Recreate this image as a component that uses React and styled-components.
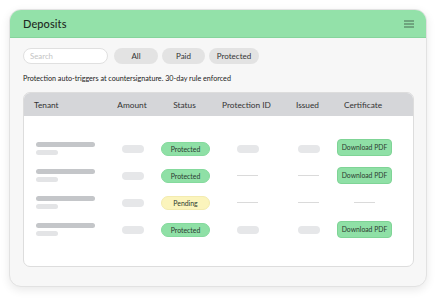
import React from "react";
import styled, { createGlobalStyle } from "styled-components";

const Global = createGlobalStyle`
  html, body { margin: 0; padding: 0; background: #ffffff; }
  body { font-family: Lato, "Noto Sans", "DejaVu Sans", sans-serif; color: #222; }
  * { box-sizing: border-box; }
`;

const Page = styled.div`
  width: 440px;
  height: 301px;
  padding: 9px 13px 14px 9px;
`;

const Card = styled.div`
  width: 418px;
  height: 278px;
  border-radius: 12px;
  background: #f7f7f7;
  border: 1px solid #e2e2e2;
  box-shadow: 0 3px 10px rgba(0, 0, 0, 0.09);
  overflow: hidden;
  display: flex;
  flex-direction: column;
`;

const Header = styled.div`
  height: 28px;
  flex: none;
  background: #93e1a9;
  border-bottom: 1px solid #86d49c;
  display: flex;
  align-items: center;
  justify-content: space-between;
  padding: 0 12px 0 13px;
`;

const Title = styled.h1`
  margin: 0;
  font-size: 11px;
  font-weight: 500;
  color: #1f2a22;
  letter-spacing: 0.1px;
`;

const Body = styled.div`
  padding: 10px 13px 0 13px;
  display: flex;
  flex-direction: column;
`;

const Toolbar = styled.div`
  display: flex;
  align-items: center;
  gap: 4px;
  height: 16px;
`;

const Search = styled.div`
  width: 85px;
  height: 16px;
  border-radius: 8px;
  background: #ffffff;
  border: 1px solid #e0e0e0;
  font-size: 7.8px;
  color: #c4c4c4;
  display: flex;
  align-items: center;
  padding-left: 6px;
  margin-right: 2px;
`;

const Chip = styled.div`
  width: ${(p) => p.$w}px;
  height: 16px;
  border-radius: 8px;
  background: #e3e3e3;
  font-size: 8px;
  color: #333;
  display: flex;
  align-items: center;
  justify-content: center;
`;

const Note = styled.p`
  margin: 10px 0 0 0;
  font-size: 7.2px;
  color: #222;
  line-height: 9px;
`;

const Table = styled.div`
  margin-top: 9px;
  width: 391px;
  height: 175px;
  background: #ffffff;
  border: 1px solid #dddddd;
  border-radius: 7px;
  overflow: hidden;
`;

const Grid = styled.div`
  display: grid;
  grid-template-columns: 76px 44px 61px 63px 59px 52px;
  align-items: center;
  justify-items: center;
  padding-left: 10px;
  height: ${(p) => p.$h}px;
`;

const HeadRow = styled(Grid)`
  background: #d5d6d9;
  font-size: 8.3px;
  color: #333;
`;

const Rows = styled.div`
  padding-top: 19px;
`;

const HeadCell = styled.div`
  justify-self: ${(p) => (p.$left ? "start" : "center")};
`;

const TenantCell = styled.div`
  justify-self: start;
  padding-left: 2px;
  display: flex;
  flex-direction: column;
  gap: 3px;
`;

const Bar = styled.div`
  width: ${(p) => p.$w}px;
  height: ${(p) => p.$h}px;
  border-radius: 3px;
  background: ${(p) => p.$c};
`;

const Dash = styled.div`
  width: 21px;
  height: 1px;
  background: #dadada;
  margin-left: ${(p) => p.$off || 0}px;
`;

const Pill = styled.div`
  width: 22px;
  height: 8px;
  border-radius: 4px;
  background: #e6e7e9;
  margin-left: ${(p) => p.$off || 0}px;
`;

const Status = styled.div`
  width: 49px;
  height: 14px;
  border-radius: 7px;
  font-size: 6.9px;
  display: flex;
  align-items: center;
  justify-content: center;
  margin-left: 2px;
  color: #2c3a30;
  background: ${(p) => (p.$kind === "pending" ? "#fbf4bc" : "#8fe0a6")};
  border: 1px solid ${(p) => (p.$kind === "pending" ? "#f3ebb0" : "#85da9d")};
`;

const Download = styled.div`
  width: 55px;
  height: 17px;
  border-radius: 4px;
  background: #8fe0a6;
  border: 1px solid #7fd496;
  font-size: 6.8px;
  color: #2c3a30;
  display: flex;
  align-items: center;
  justify-content: center;
  margin-left: 3px;
  margin-top: ${(p) => p.$up || 0}px;
`;

const Menu = () => (
  <svg width="10" height="8" viewBox="0 0 10 8">
    <g stroke="#4b6a55" strokeWidth="1.2">
      <line x1="0" y1="1" x2="10" y2="1" />
      <line x1="0" y1="4" x2="10" y2="4" />
      <line x1="0" y1="7" x2="10" y2="7" />
    </g>
  </svg>
);

const rows = [
  { status: "Protected", kind: "ok", ids: true, cert: true, up: -3 },
  { status: "Protected", kind: "ok", ids: false, cert: true, up: -1 },
  { status: "Pending", kind: "pending", ids: false, cert: false },
  { status: "Protected", kind: "ok", ids: true, cert: true, up: -1 },
];

export default function App() {
  return (
    <>
      <Global />
      <Page>
        <Card>
          <Header>
            <Title>Deposits</Title>
            <Menu />
          </Header>
          <Body>
            <Toolbar>
              <Search>Search</Search>
              <Chip $w={44}>All</Chip>
              <Chip $w={43}>Paid</Chip>
              <Chip $w={50}>Protected</Chip>
            </Toolbar>
            <Note>Protection auto-triggers at countersignature. 30-day rule enforced</Note>
            <Table>
              <HeadRow $h={23}>
                <HeadCell $left>Tenant</HeadCell>
                <HeadCell>Amount</HeadCell>
                <HeadCell>Status</HeadCell>
                <HeadCell>Protection ID</HeadCell>
                <HeadCell>Issued</HeadCell>
                <HeadCell>Certificate</HeadCell>
              </HeadRow>
              <Rows>
                {rows.map((r, i) => (
                  <Grid key={i} $h={27}>
                    <TenantCell>
                      <Bar $w={59} $h={5} $c="#c4c6c9" />
                      <Bar $w={22} $h={4.5} $c="#e3e4e6" />
                    </TenantCell>
                    <Pill $off={1} />
                    <Status $kind={r.kind}>{r.status}</Status>
                    {r.ids ? <Pill $off={2} /> : <Dash $off={2} />}
                    {r.ids ? <Pill $off={2} /> : <Dash $off={2} />}
                    {r.cert ? <Download $up={r.up}>Download PDF</Download> : <Dash $off={2} />}
                  </Grid>
                ))}
              </Rows>
            </Table>
          </Body>
        </Card>
      </Page>
    </>
  );
}
